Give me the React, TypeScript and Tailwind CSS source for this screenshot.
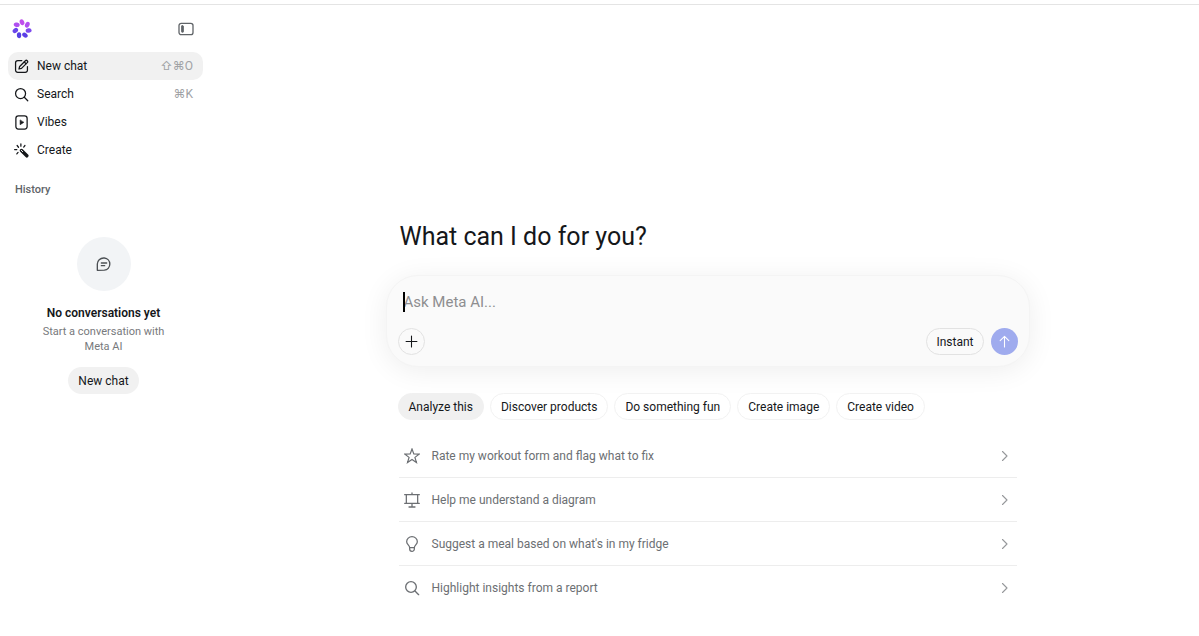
import React from "react";

type IconProps = { className?: string };

const stroke = {
  viewBox: "0 0 24 24",
  fill: "none",
  stroke: "currentColor",
  strokeWidth: 2,
  strokeLinecap: "round" as const,
  strokeLinejoin: "round" as const,
  "aria-hidden": true,
};

function Logo() {
  const petals = ["#c04fec", "#b24ff0", "#7d49ee", "#5a3fe6", "#5540e2", "#6a45ea", "#b04ff0"];
  return (
    <svg viewBox="-12 -12 24 24" className="size-6" role="img" aria-label="Meta AI">
      {petals.map((fill, i) => (
        <ellipse
          key={i}
          cx="0"
          cy="-6.8"
          rx="2.2"
          ry="3"
          fill={fill}
          transform={`rotate(${(i * 360) / 7}) rotate(-25 0 -6.8)`}
        />
      ))}
    </svg>
  );
}

function PanelIcon({ className }: IconProps) {
  return (
    <svg {...stroke} viewBox="0 0 16 14" strokeWidth={1.3} className={className}>
      <rect x="1" y="1.3" width="14" height="11.4" rx="2.2" />
      <rect x="3.6" y="3.8" width="1.8" height="6.4" rx="0.5" fill="currentColor" strokeWidth={0.9} />
    </svg>
  );
}

function ComposeIcon({ className }: IconProps) {
  return (
    <svg {...stroke} className={className}>
      <path d="M12.5 2.5H6A3.5 3.5 0 0 0 2.5 6v12A3.5 3.5 0 0 0 6 21.5h12a3.5 3.5 0 0 0 3.5-3.5V12" />
      <path d="M18.2 2.8a2 2 0 0 1 3 3L12 15l-4 1 1-4z" />
      <path d="m16.5 4.8 2.7 2.7" />
    </svg>
  );
}

function SearchIcon({ className }: IconProps) {
  return (
    <svg {...stroke} className={className}>
      <circle cx="10.5" cy="10.5" r="8" />
      <path d="m16.5 16.5 5.5 5.5" />
    </svg>
  );
}

function VibesIcon({ className }: IconProps) {
  return (
    <svg {...stroke} className={className}>
      <rect x="3" y="1.5" width="18" height="21" rx="4" />
      <path d="M9.8 8.5v7l5.5-3.5z" fill="currentColor" strokeWidth={1} />
    </svg>
  );
}

function WandIcon({ className }: IconProps) {
  return (
    <svg {...stroke} className={className}>
      <path d="m12 12 8.5 8.5" strokeWidth={5.5} />
      <path d="m11.8 11.8 2 2" stroke="white" strokeWidth={1.6} />
      <path d="M11 1.5V5M5 4l2.2 2.8M17.5 4l-2 2.5M1 10.5h3.5M6.5 15l-2 2.5" />
    </svg>
  );
}

function ChatIcon({ className }: IconProps) {
  return (
    <svg {...stroke} className={className}>
      <path d="M2 21.5V12a9.5 9 0 0 1 9.5-9h1a9.2 9.2 0 0 1 0 18.3z" />
      <path d="M8 10.5h8M8 14.5h5" />
    </svg>
  );
}

function PlusIcon({ className }: IconProps) {
  return (
    <svg {...stroke} className={className}>
      <path d="M12 2v20M2 12h20" />
    </svg>
  );
}

function ArrowUpIcon({ className }: IconProps) {
  return (
    <svg {...stroke} className={className}>
      <path d="M12 22V2.5M4 10.5l8-8 8 8" />
    </svg>
  );
}

function StarIcon({ className }: IconProps) {
  return (
    <svg {...stroke} strokeWidth={1.8} strokeLinejoin="miter" className={className}>
      <path d="m12 1.5 2.7 7.5 8 .2-6.3 4.9 2.3 7.7-6.7-4.5-6.7 4.5 2.3-7.7-6.3-4.9 8-.2z" />
    </svg>
  );
}

function BoardIcon({ className }: IconProps) {
  return (
    <svg {...stroke} strokeWidth={1.9} className={className}>
      <path d="M1 4h22M3.5 4v13M20.5 4v13M1 17h22M12 1.5V4M12 17v5.5M7.5 22.5h9" />
    </svg>
  );
}

function BulbIcon({ className }: IconProps) {
  return (
    <svg {...stroke} strokeWidth={1.9} className={className}>
      <path d="M8.5 17.5C8.5 14 4 12.5 4 8.5a8 7.5 0 0 1 16 0c0 4-4.5 5.5-4.5 9z" />
      <path d="M8.5 17.5v2a3.5 3.5 0 0 0 7 0v-2" />
    </svg>
  );
}

function ChevronIcon({ className }: IconProps) {
  return (
    <svg {...stroke} viewBox="0 0 12 12" strokeWidth={1.1} className={className}>
      <path d="M3.5 1.5 8 6l-4.5 4.5" />
    </svg>
  );
}

const navItems = [
  { label: "New chat", Icon: ComposeIcon, keys: "⇧⌘O", active: true },
  { label: "Search", Icon: SearchIcon, keys: "⌘K", active: false },
  { label: "Vibes", Icon: VibesIcon, keys: "", active: false },
  { label: "Create", Icon: WandIcon, keys: "", active: false },
];

const chips = ["Analyze this", "Discover products", "Do something fun", "Create image", "Create video"];

const prompts = [
  { label: "Rate my workout form and flag what to fix", Icon: StarIcon },
  { label: "Help me understand a diagram", Icon: BoardIcon },
  { label: "Suggest a meal based on what's in my fridge", Icon: BulbIcon },
  { label: "Highlight insights from a report", Icon: SearchIcon },
];

function Sidebar() {
  return (
    <aside className="flex w-[216px] shrink-0 flex-col pr-[13px] pl-2">
      <div className="flex h-[47px] items-center justify-between pr-[9px] pl-0.5">
        <Logo />
        <button type="button" aria-label="Toggle sidebar" className="text-[#606468]">
          <PanelIcon className="h-3.5 w-4" />
        </button>
      </div>
      <nav className="flex flex-col">
        {navItems.map(({ label, Icon, keys, active }) => (
          <a
            key={label}
            href="#"
            className={`flex h-7 items-center gap-2 rounded-[10px] pr-2.5 pl-1.5 ${active ? "bg-[#f1f1f1]" : ""}`}
          >
            <Icon className="size-[15px]" />
            <span className="flex-1">{label}</span>
            <span className="text-[#a0a2a5]">{keys}</span>
          </a>
        ))}
      </nav>
      <h2 className="mt-[18px] px-[7px] text-[11px] leading-4 font-medium text-[#606468]">History</h2>
      <section className="mt-[39px] flex flex-col items-center pr-1 text-center">
        <div className="flex size-[54px] items-center justify-center rounded-full bg-[#f2f4f6] text-[#4c5054]">
          <ChatIcon className="size-4" />
        </div>
        <h3 className="mt-3.5 leading-4 font-semibold">No conversations yet</h3>
        <p className="mt-[3px] w-36 text-[11px] leading-[15px] text-[#77797c]">Start a conversation with Meta AI</p>
        <button type="button" className="mt-[13px] h-[27px] rounded-full bg-[#f1f1f1] px-2.5">
          New chat
        </button>
      </section>
    </aside>
  );
}

function Composer() {
  return (
    <form
      className="rounded-[32px] border border-[#f4f4f4] bg-[#fafafa] px-[11px] pt-3.5 pb-[11px] shadow-[0_4px_28px_rgba(0,0,0,0.07)]"
      onSubmit={(e) => e.preventDefault()}
    >
      <div className="relative flex px-1.5">
        <span className="absolute top-0.5 left-[5px] h-5 w-0.5 bg-black" aria-hidden="true" />
        <input
          type="text"
          aria-label="Ask Meta AI"
          placeholder="Ask Meta AI..."
          className="h-6 min-w-0 flex-1 bg-transparent text-[15px] outline-none placeholder:text-[#8e8e90]"
        />
      </div>
      <div className="mt-3.5 flex items-center gap-[7px]">
        <button
          type="button"
          aria-label="Add"
          className="mr-auto flex size-[27px] items-center justify-center rounded-full border border-[#e2e2e2]"
        >
          <PlusIcon className="size-[13px]" />
        </button>
        <button type="button" className="h-[27px] rounded-full border border-[#e2e2e2] px-[9px]">
          Instant
        </button>
        <button
          type="submit"
          aria-label="Send"
          className="flex size-[27px] items-center justify-center rounded-full bg-[#9fabee] text-white"
        >
          <ArrowUpIcon className="size-[13px]" />
        </button>
      </div>
    </form>
  );
}

export default function App() {
  return (
    <div className="min-h-screen bg-white pt-1 font-['Roboto','Inter','Liberation_Sans',sans-serif] text-xs text-[#15171a]">
      <div className="flex border-t border-[#e4e4e4]">
        <Sidebar />
        <main className="flex min-w-0 flex-1 justify-center pt-[214px]">
          <div className="w-full max-w-[644px]">
            <h1 className="px-3.5 text-[25px] leading-9">What can I do for you?</h1>
            <div className="mt-5">
              <Composer />
            </div>
            <div className="mt-[26px] flex flex-wrap gap-1.5 px-3">
              {chips.map((chip, i) => (
                <button
                  key={chip}
                  type="button"
                  className={`h-[27px] rounded-full border px-2.5 ${
                    i === 0 ? "border-[#f0f0f0] bg-[#f0f0f0]" : "border-[#f2f2f2]"
                  }`}
                >
                  {chip}
                </button>
              ))}
            </div>
            <ul className="mt-3.5 divide-y divide-[#ededed] px-[13px]">
              {prompts.map(({ label, Icon }) => (
                <li key={label}>
                  <button type="button" className="flex h-[43px] w-full items-center gap-3 pr-1.5 pl-[5px] text-left text-[#6c6f73]">
                    <Icon className="size-4" />
                    <span className="flex-1">{label}</span>
                    <ChevronIcon className="size-3 text-[#96989b]" />
                  </button>
                </li>
              ))}
            </ul>
          </div>
        </main>
      </div>
    </div>
  );
}
